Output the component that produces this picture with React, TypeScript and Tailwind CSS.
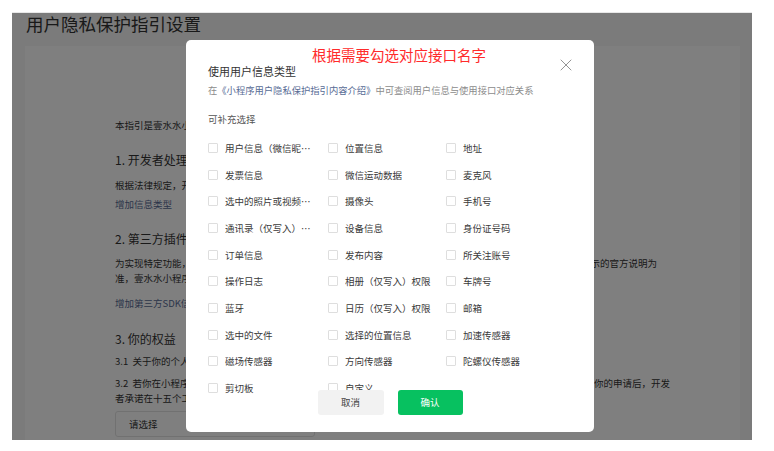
import { X } from 'lucide-react';

const options = [
  '用户信息（微信昵称、头像）', '位置信息', '地址',
  '发票信息', '微信运动数据', '麦克风',
  '选中的照片或视频信息', '摄像头', '手机号',
  '通讯录（仅写入）权限', '设备信息', '身份证号码',
  '订单信息', '发布内容', '所关注账号',
  '操作日志', '相册（仅写入）权限', '车牌号',
  '蓝牙', '日历（仅写入）权限', '邮箱',
  '选中的文件', '选择的位置信息', '加速传感器',
  '磁场传感器', '方向传感器', '陀螺仪传感器',
  '剪切板', '自定义', '',
];

export default function App() {
  return (
    <div className="w-[774px] h-[451px] bg-white overflow-hidden pt-[12px] pl-[12px] font-['Noto_Sans_CJK_SC',sans-serif]">
      <div className="relative w-[740px] h-[428px] overflow-hidden bg-[#f6f6f6] border-t border-[#e8e8e8]">
        <PageBehind />

        {/* mask + dialog */}
        <div className="absolute inset-0 bg-black/50">
          <div className="absolute left-[174px] top-[27px] w-[408px] h-[392px] rounded-[5px] bg-white pl-[22px]">
            <Dialog />
          </div>
        </div>
      </div>
    </div>
  );
}

function PageBehind() {
  return (
    <div>
      <h1 className="pl-[14px] text-[17.5px] leading-[22px] text-[#333]">用户隐私保护指引设置</h1>
      <div className="ml-[13px] mr-[12px] mt-[11px] h-[400px] bg-white pl-[90px] pt-[72px] text-[#333]">
        <p className="text-[9.5px] leading-[14px] whitespace-nowrap">本指引是壹水水小程序开发者为处理你的个人信息而制定。</p>

        <h2 className="mt-[19px] text-[12px] leading-[18px]">1. 开发者处理的信息</h2>
        <p className="mt-[9px] text-[9.5px] leading-[14px] whitespace-nowrap">根据法律规定，开发者仅处理实现小程序功能所必要的信息。</p>
        <p className="mt-[5px] text-[9.5px] leading-[14px] text-[#576b95]">增加信息类型</p>

        <h2 className="mt-[19px] text-[12px] leading-[18px]">2. 第三方插件信息</h2>
        <div className="mt-[8px] text-[9.5px] leading-[15px]">
          <div className="w-[542px] flex justify-between whitespace-nowrap">
            <span>为实现特定功能，开发者可能在小程序中接入由第三方提供的插件</span>
            <span>示的官方说明为</span>
          </div>
          <div className="whitespace-nowrap">准，壹水水小程序所接入的第三方插件信息如下：</div>
        </div>
        <p className="mt-[10px] text-[9.5px] leading-[14px] text-[#576b95]">增加第三方SDK信息</p>

        <h2 className="mt-[20px] text-[12px] leading-[18px]">3. 你的权益</h2>
        <p className="mt-[6px] text-[9.5px] leading-[14px] whitespace-nowrap">3.1&nbsp;&nbsp;关于你的个人信息，你可以通过以下方式与开发者联系。</p>
        <div className="mt-[8px] text-[9.5px] leading-[15px]">
          <div className="w-[555px] flex justify-between whitespace-nowrap">
            <span>3.2&nbsp;&nbsp;若你在小程序中注册了账号，你可以通过以下方式与开发者联系</span>
            <span>你的申请后，开发</span>
          </div>
          <div className="whitespace-nowrap">者承诺在十五个工作日内完成核查和处理。</div>
        </div>
        <div className="mt-[5px] w-[200px] h-[26px] flex items-center pl-[13px] border border-[#e3e3e3] rounded-[3px] text-[9.5px] text-[#333]">请选择</div>
      </div>
    </div>
  );
}

function Dialog() {
  return (
    <>
      <div className="absolute left-[126px] top-[6px] text-[14.5px] leading-[18px] text-[#ff2b2b] whitespace-nowrap">根据需要勾选对应接口名字</div>
      <button className="absolute left-[370px] top-[15px] text-[#8a8a8a]">
        <X size={20} strokeWidth={1.1} />
      </button>

      <div className="pt-[23px] text-[11px] leading-[16px] text-[#333]">使用用户信息类型</div>
      <div className="mt-[4px] text-[9.3px] leading-[14px] text-[#8c8c8c] whitespace-nowrap">
        在<span className="text-[#576b95]">《小程序用户隐私保护指引内容介绍》</span>中可查阅用户信息与使用接口对应关系
      </div>
      <div className="mt-[15px] text-[9.5px] leading-[14px] text-[#555]">可补充选择</div>

      <div className="mt-[8.6px] grid grid-cols-[120px_118px_120px] auto-rows-[26.7px]">
        {options.map((o, i) => (
          <div key={i} className="flex items-center gap-[7px]">
            {o && <span className="w-[10px] h-[10px] shrink-0 border border-[#dedede] rounded-[1px] bg-white" />}
            <span className="max-w-[90px] truncate text-[9.5px] text-[#3a3a3a]">{o}</span>
          </div>
        ))}
      </div>

      <div className="absolute left-0 right-0 bottom-[17px] flex justify-center">
        <div className="flex gap-[14px] bg-white">
          <button className="w-[66px] h-[25px] rounded-[3px] bg-[#f2f2f2] text-[9.5px] text-[#444]">取消</button>
          <button className="w-[65px] h-[25px] rounded-[3px] bg-[#07c160] text-[9.5px] text-white">确认</button>
        </div>
      </div>
    </>
  );
}
